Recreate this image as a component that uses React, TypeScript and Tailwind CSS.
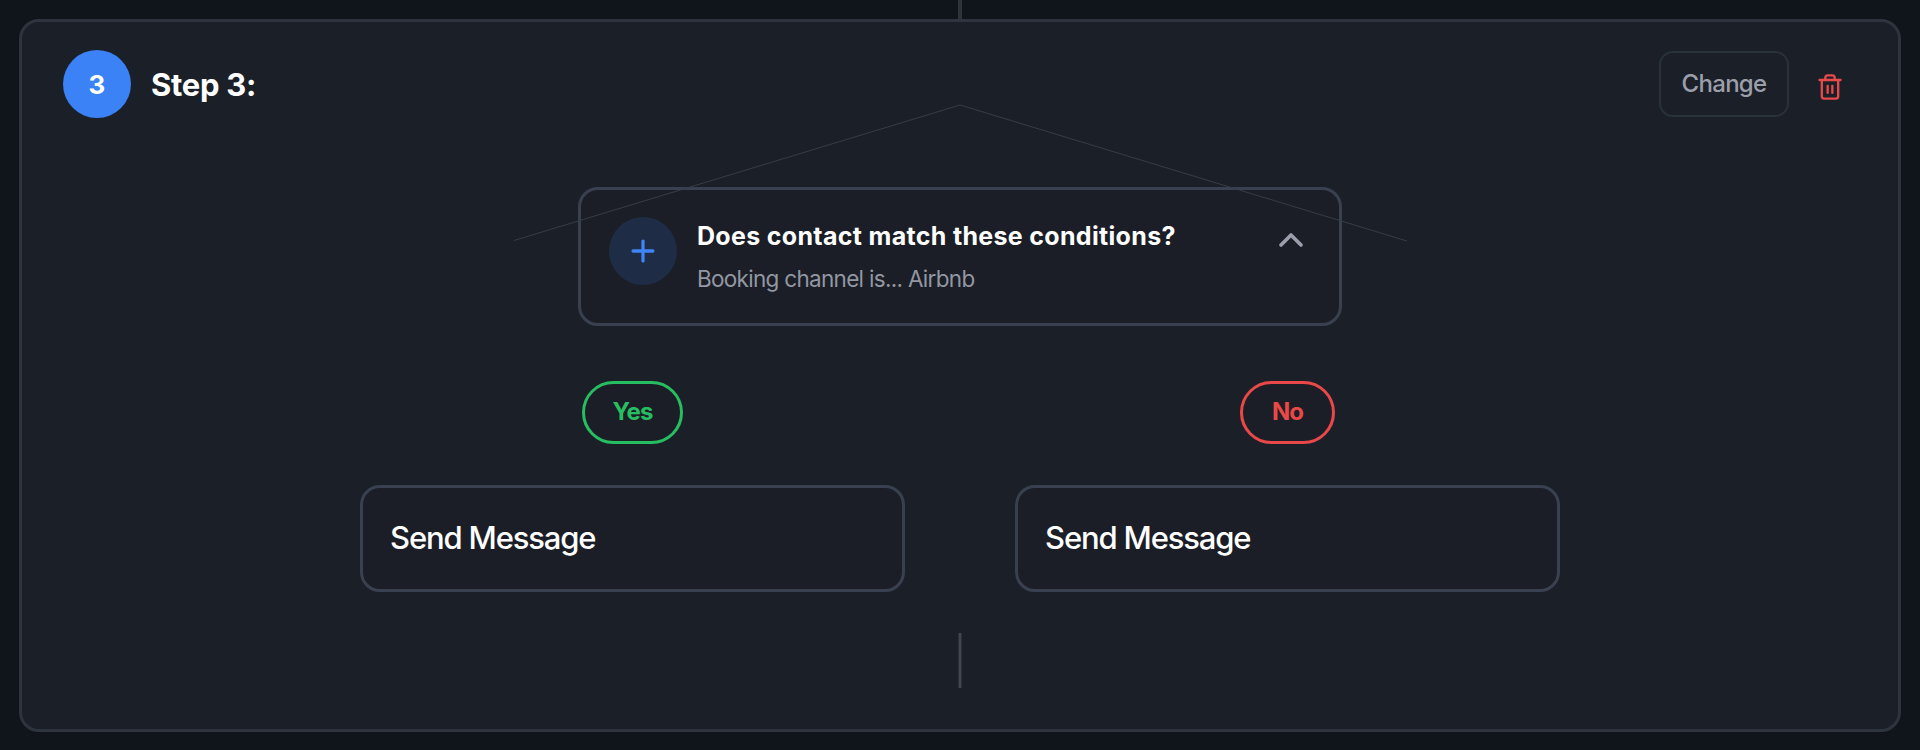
import React, { useState } from 'react';
import { ChevronUpIcon, PlusIcon, Trash2Icon } from 'lucide-react';
interface BranchProps {
  label: string;
  action: string;
  tone: 'yes' | 'no';
}
const pillStyles = {
  yes: 'w-[101px] border-[#27bd61] text-[#27bd61]',
  no: 'w-[95px] border-[#e94848] text-[#e94848]'
};
const Branch: React.FC<BranchProps> = ({
  label,
  action,
  tone
}) => {
  return <div className="flex w-[545px] flex-col items-center gap-[41px]">
      <div className={`flex h-[63px] items-center justify-center rounded-full border-[3px] bg-[#1b1e26] pb-px text-[24px] font-bold tracking-[-0.9px] ${pillStyles[tone]}`}>
        {label}
      </div>
      <div className="flex h-[107px] w-full items-center rounded-[20px] border-[3px] border-[#394050] bg-[#1b1e26] pl-[27px] text-[31px] font-[450] tracking-[-1.15px] text-white">
        {action}
      </div>
    </div>;
};
const App: React.FC = () => {
  const [open, setOpen] = useState(true);
  return <main className="h-[750px] w-[1920px] overflow-hidden bg-[#10151b] font-['Inter',sans-serif]">
      <div className="mx-auto h-[19px] w-1 bg-[#2c333b]" />
      <section className="relative mx-[19px] flex h-[713px] flex-col rounded-[20px] border-[3px] border-[#2d343d] bg-[#1b2028] pt-7">
        <svg className="pointer-events-none absolute top-[82px] left-[490px] z-10" width="896" height="138" fill="none" stroke="#363d46">
          <path d="M2 136.5 L448 1 L895 137" />
        </svg>
        <header className="flex h-[68px] items-center pr-[54px] pl-[41px]">
          <div className="flex size-[68px] items-center justify-center rounded-full bg-[#3b82f6] text-[26px] font-bold text-white">3</div>
          <h2 className="mt-0.5 ml-5 text-[31px] font-bold tracking-[-0.3px] text-white">Step 3:</h2>
          <button className="ml-auto h-[66px] w-[130px] rounded-[14px] border-2 border-[#29313a] text-[24px] font-medium tracking-[-0.7px] text-[#9b9fab]">
            Change
          </button>
          <button className="mt-[6px] ml-[27px] text-[#e84a4a]">
            <Trash2Icon className="size-7" strokeWidth={2} />
          </button>
        </header>
        <div className="relative mx-auto mt-[69px] flex h-[139px] w-[764px] rounded-[20px] border-[3px] border-[#394050] bg-[#1b1e26] pt-[27px] pr-7 pl-7">
          <div className="flex size-[68px] shrink-0 items-center justify-center rounded-full bg-[#1e2d45] text-[#3f85f5]">
            <PlusIcon className="size-[34px]" strokeWidth={2.3} />
          </div>
          <div className="ml-5">
            <h3 className="mt-[3px] text-[25px] leading-8 font-bold tracking-[0.32px] text-white">Does contact match these conditions?</h3>
            <p className="mt-[11px] text-[22.5px] leading-8 tracking-[-0.7px] text-[#9297a2]">Booking channel is... Airbnb</p>
          </div>
          <button onClick={() => setOpen(!open)} className="mt-[3px] ml-auto h-10 text-[#9b9fab]">
            <ChevronUpIcon className={open ? 'size-10' : 'size-10 rotate-180'} strokeWidth={2.2} />
          </button>
        </div>
        <div className="mt-[55px] flex justify-center gap-[110px]">
          <Branch label="Yes" action="Send Message" tone="yes" />
          <Branch label="No" action="Send Message" tone="no" />
        </div>
        <div className="mx-auto mt-[41px] h-[55px] w-1 border-x border-[#2b3138] bg-[#40464f]" />
      </section>
    </main>;
};
export default App;
